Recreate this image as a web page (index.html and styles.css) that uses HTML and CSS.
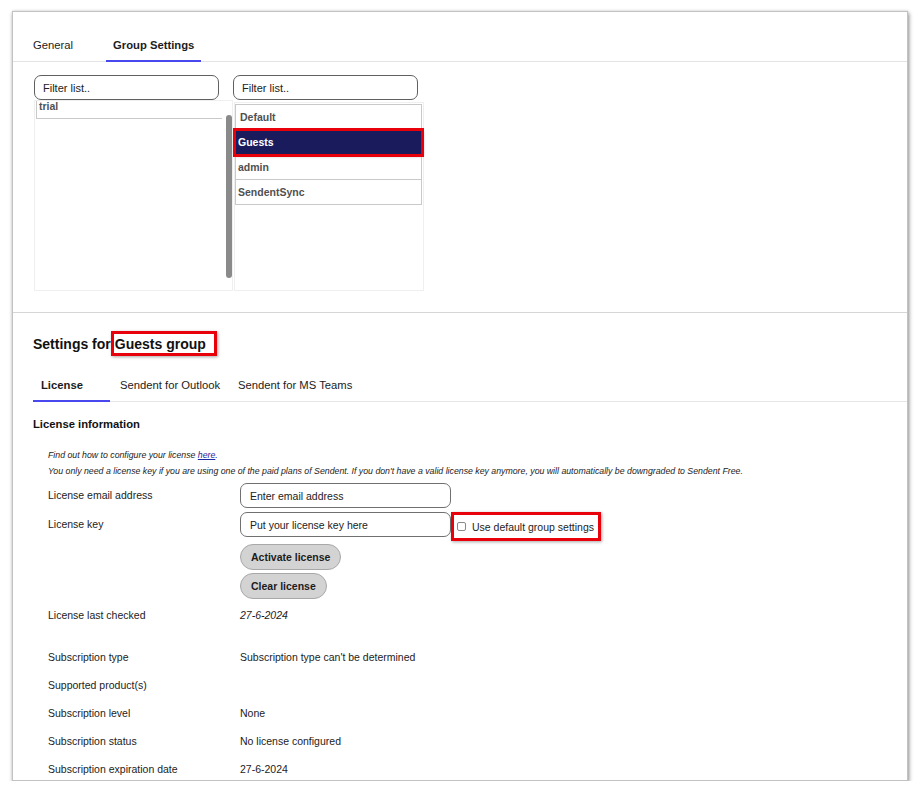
FILE: index.html
```html
<!DOCTYPE html>
<html lang="en">
<head>
<meta charset="utf-8">
<title>Group Settings</title>
<link rel="stylesheet" href="styles.css">
</head>
<body>
<div class="card">
  <div class="tabs">
    <div class="tab">General</div>
    <div class="tab active">Group Settings</div>
  </div>

  <div class="groups">
    <div class="col col-left">
      <input class="filter" type="text" placeholder="Filter list..">
      <div class="listbox listbox-left">
        <div class="list-items">
          <div class="item item-cut">trial</div>
        </div>
        <div class="scrollbar"></div>
      </div>
    </div>
    <div class="col col-right">
      <input class="filter" type="text" placeholder="Filter list..">
      <div class="listbox listbox-right">
        <div class="item item-first">Default</div>
        <div class="item selected">Guests</div>
        <div class="item">admin</div>
        <div class="item">SendentSync</div>
      </div>
    </div>
  </div>

  <div class="settings">
    <h2 class="title">Settings for<span class="hl">Guests group</span></h2>

    <div class="subtabs">
      <div class="subtab active">License</div>
      <div class="subtab">Sendent for Outlook</div>
      <div class="subtab">Sendent for MS Teams</div>
    </div>

    <h3 class="section-title">License information</h3>

    <div class="notes">
      <p>Find out how to configure your license <a href="#">here</a>.</p>
      <p>You only need a license key if you are using one of the paid plans of Sendent. If you don't have a valid license key anymore, you will automatically be downgraded to Sendent Free.</p>
    </div>

    <div class="form">
      <div class="row">
        <div class="label">License email address</div>
        <input class="field" type="text" placeholder="Enter email address">
      </div>
      <div class="row row-key">
        <div class="label">License key</div>
        <input class="field" type="text" placeholder="Put your license key here">
        <label class="default-box"><span class="check"></span>Use default group settings</label>
      </div>
      <div class="buttons">
        <button class="btn">Activate license</button>
        <button class="btn">Clear license</button>
      </div>
      <div class="data-row">
        <div class="label">License last checked</div>
        <div class="value italic">27-6-2024</div>
      </div>
      <div class="data-row gap-top">
        <div class="label">Subscription type</div>
        <div class="value">Subscription type can't be determined</div>
      </div>
      <div class="data-row">
        <div class="label">Supported product(s)</div>
        <div class="value"></div>
      </div>
      <div class="data-row">
        <div class="label">Subscription level</div>
        <div class="value">None</div>
      </div>
      <div class="data-row">
        <div class="label">Subscription status</div>
        <div class="value">No license configured</div>
      </div>
      <div class="data-row">
        <div class="label">Subscription expiration date</div>
        <div class="value">27-6-2024</div>
      </div>
    </div>
  </div>
</div>
</body>
</html>
```

FILE: styles.css
```css
* { box-sizing: border-box; }

body {
  margin: 0;
  background: #ffffff;
  font-family: "Liberation Sans", Arial, sans-serif;
  color: #1c1c1c;
}

.card {
  margin: 11px 0 0 12px;
  width: 896px;
  height: 770px;
  border: 1px solid #c2c2c2;
  box-shadow: 1px 2px 4px rgba(0, 0, 0, 0.45), 0 -1px 2px rgba(0, 0, 0, 0.06);
  background: #ffffff;
  overflow: hidden;
}

/* top tabs */
.tabs {
  display: flex;
  gap: 26px;
  padding: 26px 0 0 13px;
  border-bottom: 1px solid #e3e3e3;
}

.tab {
  font-size: 11.25px;
  line-height: 14px;
  padding: 0 7px 8px;
  border-bottom: 2px solid transparent;
  margin-bottom: -1px;
  color: #1c1c1c;
}

.tab.active {
  font-weight: bold;
  border-bottom-color: #4848ee;
}

/* group lists */
.groups {
  display: flex;
  padding: 13px 0 21px 21px;
  border-bottom: 1px solid #d6d6d6;
}

.col-left { width: 199px; }
.col-right { width: 190px; }

.filter {
  display: block;
  width: 185px;
  height: 25px;
  margin: 0;
  padding: 0 0 0 8px;
  border: 1px solid #606060;
  border-radius: 7px;
  font-family: "Liberation Sans", Arial, sans-serif;
  font-size: 11px;
  color: #222;
  background: #fff;
  outline: none;
}

.filter::placeholder,
.field::placeholder {
  color: #222;
  opacity: 1;
}

.listbox {
  border: 1px solid #efefef;
}

.listbox-left {
  display: flex;
  width: 199px;
  height: 191px;
}

.list-items {
  width: 187px;
  margin-left: 1px;
  overflow: hidden;
}

.scrollbar {
  width: 6px;
  height: 163px;
  margin: 14px 0 0 4px;
  border-radius: 3px;
  background: #8a8a8a;
}

.listbox-right {
  width: 190px;
  height: 189px;
  margin: 2px 0 0 1px;
  padding-top: 1px;
}

.item {
  height: 25px;
  width: 187px;
  padding-left: 2px;
  border: 1px solid #c9c9c9;
  border-top: 0;
  font-size: 10.5px;
  font-weight: bold;
  line-height: 24px;
  color: #505050;
}

.item-first {
  height: 26px;
  border-top: 1px solid #c9c9c9;
  padding-left: 4px;
}

.item-cut {
  margin-top: -8px;
  border-top: 1px solid #c9c9c9;
  height: 26px;
}

.item.selected {
  background: #1a1b5d;
  color: #ffffff;
  border-color: #1a1b5d;
  outline: 3px solid #e8000b;
  outline-offset: -1px;
  box-shadow: 1px 1px 3px rgba(0, 0, 0, 0.4);
}

/* settings */
.settings {
  padding: 18px 0 0 20px;
}

.title {
  display: flex;
  align-items: center;
  height: 25px;
  margin: 0;
  font-size: 14px;
  font-weight: bold;
  color: #111;
}

.hl {
  display: inline-flex;
  align-items: center;
  height: 25px;
  padding: 0 8px 0 1px;
  margin-left: 0;
  border: 3px solid #e8000b;
  box-shadow: 1px 1px 3px rgba(0, 0, 0, 0.35);
}

.subtabs {
  display: flex;
  gap: 2px;
  margin-top: 22px;
  border-bottom: 1px solid #e6e6e6;
}

.subtab {
  font-size: 11.25px;
  line-height: 14px;
  padding: 0 8px 8px;
  border-bottom: 2px solid transparent;
  margin-bottom: -1px;
  color: #1c1c1c;
}

.subtab.active {
  min-width: 77px;
  font-weight: bold;
  border-bottom-color: #4848ee;
}

.section-title {
  margin: 15px 0 0;
  font-size: 11.25px;
  line-height: 14px;
  font-weight: bold;
  color: #111;
}

.notes {
  margin-top: 16px;
  padding-left: 15px;
}

.notes p {
  margin: 0;
  font-size: 8.75px;
  line-height: 16px;
  font-style: italic;
  color: #1c1c1c;
  white-space: nowrap;
}

.notes a {
  color: #1d2aa0;
  text-decoration: underline;
}

.form {
  margin-top: 4px;
  padding-left: 15px;
  font-size: 10.5px;
}

.row {
  display: flex;
  align-items: flex-start;
}

.row-key {
  margin-top: 4px;
}

.label {
  width: 192px;
  flex: none;
  line-height: 25px;
  color: #1c1c1c;
}

.field {
  width: 211px;
  height: 25px;
  margin: 0;
  padding: 0 0 0 9px;
  border: 1px solid #707070;
  border-radius: 7px;
  font-family: "Liberation Sans", Arial, sans-serif;
  font-size: 10.5px;
  color: #222;
  background: #fff;
  outline: none;
}

.default-box {
  display: flex;
  align-items: center;
  gap: 6px;
  height: 29px;
  padding: 0 4px 0 3px;
  border: 3px solid #e8000b;
  box-shadow: 1px 1px 3px rgba(0, 0, 0, 0.35);
  font-size: 10.5px;
  color: #1c1c1c;
  white-space: nowrap;
}

.check {
  display: block;
  width: 9px;
  height: 9px;
  border: 1px solid #8a8a8a;
  border-radius: 2px;
  background: #fff;
}

.buttons {
  display: flex;
  flex-direction: column;
  align-items: flex-start;
  margin-left: 192px;
}

.btn {
  height: 26px;
  margin: 3px 0 0;
  padding: 0 10px;
  border: 1px solid #a8a8a8;
  border-radius: 13px;
  background: #d3d3d3;
  font-family: "Liberation Sans", Arial, sans-serif;
  font-size: 10.5px;
  font-weight: bold;
  color: #1c1c1c;
}

.data-row {
  display: flex;
  height: 28px;
  line-height: 28px;
}

.buttons + .data-row { margin-top: 2px; }

.data-row .label { line-height: 28px; }

.gap-top { margin-top: 14px; }

.value {
  color: #1c1c1c;
}

.italic { font-style: italic; }
```
